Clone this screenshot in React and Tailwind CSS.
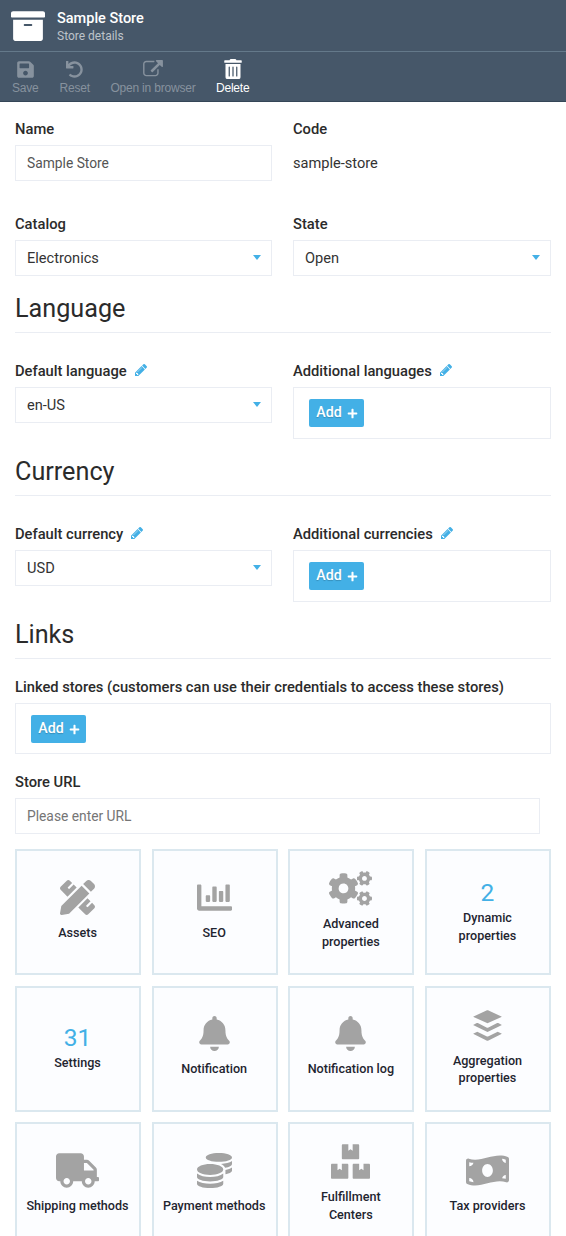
import React from "react";
import {
  FaArchive, FaSave, FaUndo, FaTrashAlt, FaPlus,
  FaPencilRuler, FaChartBar, FaCogs, FaBell, FaBuffer, FaTruck, FaCoins, FaBoxes, FaMoneyBillWave,
} from "react-icons/fa";

function ExternalLink({ className }) {
  return (
    <svg viewBox="0 0 1792 1536" fill="currentColor" className={className}>
      <path d="M1408 864v320q0 119-84.5 203.5t-203.5 84.5h-832q-119 0-203.5-84.5t-84.5-203.5v-832q0-119 84.5-203.5t203.5-84.5h704q14 0 23 9t9 23v64q0 14-9 23t-23 9h-704q-66 0-113 47t-47 113v832q0 66 47 113t113 47h832q66 0 113-47t47-113v-320q0-14 9-23t23-9h64q14 0 23 9t9 23zm384-800v512q0 26-19 45t-45 19-45-19l-176-176-652 652q-10 10-23 10t-23-10l-114-114q-10-10-10-23t10-23l652-652-176-176q-19-19-19-45t19-45 45-19h512q26 0 45 19t19 45z" />
    </svg>
  );
}

function Pencil({ className }) {
  return (
    <svg viewBox="128 149 1515 1515" fill="currentColor" className={className}>
      <path d="M491 1536l91-91-235-235-91 91v107h128v128h107zm523-928q0-22-22-22-10 0-17 7l-542 542q-7 7-7 17 0 22 22 22 10 0 17-7l542-542q7-7 7-17zm-54-192l416 416-832 832h-416v-416zm683 96q0 53-37 90l-166 166-416-416 166-165q36-38 90-38 53 0 91 38l235 234q37 39 37 91z" />
    </svg>
  );
}

function Tool({ icon: Icon, label, active, className, iconClass = "size-[18px]" }) {
  return (
    <div className={`flex flex-col items-center ${active ? "text-white" : "text-[#87929e]"} ${className}`}>
      <div className="flex h-5 items-center justify-center"><Icon className={iconClass} /></div>
      <span className="mt-0.5 whitespace-nowrap font-['Liberation_Sans',sans-serif] text-[12px] leading-[15px] tracking-[-0.2px]">{label}</span>
    </div>
  );
}

function Label({ children, edit }) {
  return (
    <div className="flex h-[18px] items-center whitespace-nowrap text-[14.73px] leading-[18px] font-medium text-[#2b2b2b]">
      {children}
      {edit && <Pencil className="mb-[2px] ml-[8px] size-[12px] text-[#43b0e6]" />}
    </div>
  );
}

function Select({ value }) {
  return (
    <div className="mt-[7px] flex h-9 items-center justify-between border border-[#eaedf3] bg-white pr-[10px] pl-[11px] text-[14.6px] text-[#333]">
      <span className="pt-px">{value}</span>
      <span className="mb-0.5 h-0 w-0 border-x-[4.5px] border-t-[5px] border-x-transparent border-t-[#43b0e6]" />
    </div>
  );
}

function AddBox({ className = "h-[52px]" }) {
  return (
    <div className={`mt-[7px] flex items-center border border-[#eaedf3] pl-[15px] ${className}`}>
      <button className="flex h-7 w-[55px] items-center justify-center gap-[5px] rounded-[2px] bg-[#43b0e6] pl-px text-[14.2px] font-medium text-white [text-shadow:0_1px_1px_rgba(0,0,0,0.2)]">
        Add <FaPlus className="mt-px size-[11px]" />
      </button>
    </div>
  );
}

function Heading({ children }) {
  return (
    <h2 className="h-[49px] border-b border-[#eaedf3] pt-[9px] text-[25.2px] leading-[32px] font-normal text-[#2b2b2b]">
      {children}
    </h2>
  );
}

const tiles = [
  { icon: FaPencilRuler, size: "size-[35px]", label: "Assets" },
  { icon: FaChartBar, size: "size-[35px]", label: "SEO" },
  { icon: FaCogs, size: "h-[35px] w-[43px]", label: "Advanced properties" },
  { count: 2, label: "Dynamic properties" },
  { count: 31, label: "Settings" },
  { icon: FaBell, size: "size-[35px]", label: "Notification" },
  { icon: FaBell, size: "size-[35px]", label: "Notification log" },
  { icon: FaBuffer, size: "h-[35px] w-[31px]", label: "Aggregation properties" },
  { icon: FaTruck, size: "h-[35px] w-[43px]", label: "Shipping methods" },
  { icon: FaCoins, size: "size-[35px]", label: "Payment methods" },
  { icon: FaBoxes, size: "h-[35px] w-[39px]", label: "Fulfillment Centers" },
  { icon: FaMoneyBillWave, size: "h-[35px] w-[43px]", label: "Tax providers" },
];

function Tile({ icon: Icon, size, count, label }) {
  return (
    <div className="flex h-[126px] flex-col items-center justify-center border-[2px] border-[#dbe8ef] bg-[#fcfdff] pr-px pb-[3px] text-center">
      {Icon ? (
        <Icon className={`mb-[9px] shrink-0 text-[#a3a3a3] ${size}`} />
      ) : (
        <span className="text-[24.5px] leading-[32px] text-[#43b0e6]">{count}</span>
      )}
      <span className={`text-[12.6px] leading-[17.5px] font-medium text-[#1f2530] ${label.includes("properties") || label.includes("Centers") ? "w-[90px]" : "whitespace-nowrap"}`}>
        {label}
      </span>
    </div>
  );
}

export default function App() {
  return (
    <div className="h-[1236px] w-[566px] overflow-hidden bg-white font-[Roboto,sans-serif]">
      <header className="flex h-[52px] items-center border-b border-[#64798a] bg-[#465769] pl-[11px]">
        <FaArchive className="size-[34px] text-white" />
        <div className="ml-[12px] pt-[3px]">
          <div className="text-[14.5px] leading-[18px] font-medium text-white">Sample Store</div>
          <div className="text-[12px] leading-[17px] text-[#bdc3ca]">Store details</div>
        </div>
      </header>
      <div className="flex h-[50px] border-b border-[#354657] bg-[#465769] pt-[7px] pl-3">
        <Tool icon={FaSave} label="Save" iconClass="size-[19px]" />
        <Tool icon={FaUndo} label="Reset" className="ml-[21px]" iconClass="size-[17px]" />
        <Tool icon={ExternalLink} label="Open in browser" className="ml-[20.5px]" iconClass="mb-[2px] h-[17px] w-5" />
        <Tool icon={FaTrashAlt} label="Delete" active className="ml-[20.5px]" iconClass="size-5" />
      </div>
      <main className="px-[15px]">
        <div className="grid grid-cols-[257px_258px] gap-x-[21px] pt-[18px]">
          <div>
            <Label>Name</Label>
            <div className="mt-[7px] flex h-9 items-center border border-[#eaedf3] pl-[11px] text-[13.8px] text-[#555]">Sample Store</div>
          </div>
          <div>
            <Label>Code</Label>
            <div className="mt-[7px] flex h-9 items-center pt-px text-[14.6px] text-[#333]">sample-store</div>
          </div>
        </div>
        <div className="grid grid-cols-[257px_258px] gap-x-[21px] pt-[34px]">
          <div><Label>Catalog</Label><Select value="Electronics" /></div>
          <div><Label>State</Label><Select value="Open" /></div>
        </div>
        <div className="pt-[8px]"><Heading>Language</Heading></div>
        <div className="grid grid-cols-[257px_258px] gap-x-[21px] pt-[29px]">
          <div><Label edit>Default language</Label><Select value="en-US" /></div>
          <div><Label edit>Additional languages</Label><AddBox /></div>
        </div>
        <div className="pt-[8px]"><Heading>Currency</Heading></div>
        <div className="grid grid-cols-[257px_258px] gap-x-[21px] pt-[29px]">
          <div><Label edit>Default currency</Label><Select value="USD" /></div>
          <div><Label edit>Additional currencies</Label><AddBox /></div>
        </div>
        <div className="pt-[8px]"><Heading>Links</Heading></div>
        <div className="pt-[19px]">
          <Label>Linked stores (customers can use their credentials to access these stores)</Label>
          <AddBox className="h-[51px]" />
        </div>
        <div className="pt-[19px]">
          <Label>Store URL</Label>
          <div className="mt-[7px] mr-[11px] flex h-9 items-center border border-[#eaedf3] pl-[11px] text-[13.8px] text-[#757575]">Please enter URL</div>
        </div>
        <div className="mt-[15px] grid grid-cols-4 gap-x-[10.67px] gap-y-[10.5px]">
          {tiles.map((tile) => <Tile key={tile.label} {...tile} />)}
        </div>
      </main>
    </div>
  );
}
